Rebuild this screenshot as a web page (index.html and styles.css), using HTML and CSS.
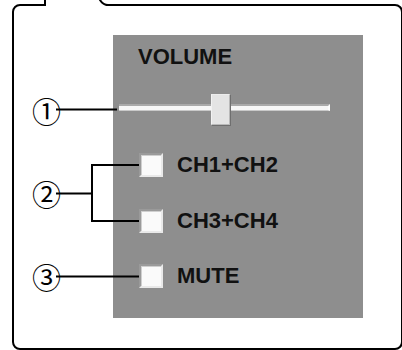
FILE: index.html
```html
<!DOCTYPE html>
<html lang="en">

<head>
    <meta charset="UTF-8">
    <meta name="viewport" content="width=device-width, initial-scale=1.0">
    <title>VOLUME</title>
    <link rel="stylesheet" href="styles.css">
</head>

<body>
    <!-- 外框 -->
    <div class="frame">
        <!-- 顶部的凸起 -->
        <svg class="tab" width="72" height="12" viewBox="0 0 72 12">
            <rect x="6" y="7" width="60" height="5" fill="#fff"/>
            <path d="M5 0 L5 10" stroke="#000" stroke-width="2" fill="none"/>
            <path d="M58 0 L60 4 Q63 9 68 9 L72 9" stroke="#000" stroke-width="2" fill="none"/>
        </svg>

        <!-- 灰色面板 -->
        <div class="panel">
            <div class="title">VOLUME</div>

            <!-- 滑块 -->
            <div class="slider">
                <div class="callout callout-1">
                    <span class="num">①</span>
                    <span class="line"></span>
                </div>
                <div class="track"></div>
                <div class="thumb"></div>
            </div>

            <!-- 两个声道 -->
            <div class="check-group">
                <div class="bracket">
                    <div class="callout callout-2">
                        <span class="num">②</span>
                        <span class="line"></span>
                    </div>
                </div>
                <div class="check-row">
                    <span class="box"></span>
                    <span class="label">CH1+CH2</span>
                </div>
                <div class="check-row">
                    <span class="box"></span>
                    <span class="label">CH3+CH4</span>
                </div>
            </div>

            <!-- 静音 -->
            <div class="check-row mute">
                <div class="callout callout-3">
                    <span class="num">③</span>
                    <span class="line"></span>
                </div>
                <span class="box"></span>
                <span class="label">MUTE</span>
            </div>
        </div>
    </div>
</body>

</html>
```

FILE: styles.css
```css
* {
    margin: 0;
    padding: 0;
    box-sizing: border-box;
}

body {
    background-color: #fff;
    font-family: "Liberation Sans", Arial, sans-serif;
}

/* 外框 */
.frame {
    position: relative;
    width: 391px;
    height: 346px;
    margin: 4px 0 0 12px;
    border: 2px solid #000;
    border-radius: 8px;
    padding: 29px 0 0 99px;
}

.tab {
    position: absolute;
    left: 26px;
    top: -10px;
    display: block;
}

/* 灰色面板 */
.panel {
    width: 250px;
    height: 283px;
    background-color: #8e8e8e;
    padding-top: 9px;
    display: flex;
    flex-direction: column;
}

.title {
    margin-left: 25px;
    font-size: 22px;
    font-weight: bold;
    line-height: 25px;
    color: #111;
}

/* 滑块 */
.slider {
    position: relative;
    width: 211px;
    height: 31px;
    margin: 25px 0 0 6px;
}

.track {
    margin-top: 10px;
    height: 7px;
    background-color: #f6f6f6;
    border-top: 2px solid #a9a9a9;
    border-bottom: 1px solid #c9c9c9;
    border-right: 2px solid #fdfdfd;
}

.thumb {
    position: absolute;
    left: 92px;
    top: 0;
    width: 19px;
    height: 31px;
    background-color: #e4e4e4;
    border-left: 1px solid #f2f2f2;
    border-top: 1px solid #ececec;
    border-right: 1px solid #b9b9b9;
    border-bottom: 1px solid #b9b9b9;
    box-shadow: 1px 1px 0 #6f6f6f;
}

/* 复选框 */
.check-group {
    position: relative;
    margin: 28px 0 0 26px;
    display: flex;
    flex-direction: column;
    gap: 32px;
}

.check-row {
    position: relative;
    display: flex;
    align-items: center;
    gap: 14px;
    height: 24px;
}

.mute {
    margin: 31px 0 0 26px;
}

.box {
    width: 24px;
    height: 24px;
    background-color: #fafafa;
    border: 2px solid;
    border-color: #9a9a9a #e9e9e9 #e9e9e9 #9a9a9a;
    box-shadow: inset 1px 1px 0 #cfcfcf;
}

.label {
    font-size: 22px;
    font-weight: bold;
    line-height: 24px;
    color: #111;
}

/* 说明编号 */
.callout {
    position: absolute;
    top: 50%;
    transform: translateY(-50%);
    display: flex;
    align-items: center;
}

.num {
    font-family: "Noto Sans CJK JP", sans-serif;
    font-size: 29px;
    line-height: 1;
    color: #000;
    margin-left: -1px;
    margin-right: -5px;
}

.line {
    flex: 1;
    height: 2px;
    background-color: #000;
}

.callout-1 {
    left: -86px;
    width: 84px;
}

.bracket {
    position: absolute;
    left: -48px;
    top: 11px;
    bottom: 11px;
    width: 48px;
    border: 2px solid #000;
    border-right: none;
}

.callout-2 {
    right: 100%;
    width: 60px;
}

.callout-3 {
    right: 100%;
    width: 106px;
}
```
